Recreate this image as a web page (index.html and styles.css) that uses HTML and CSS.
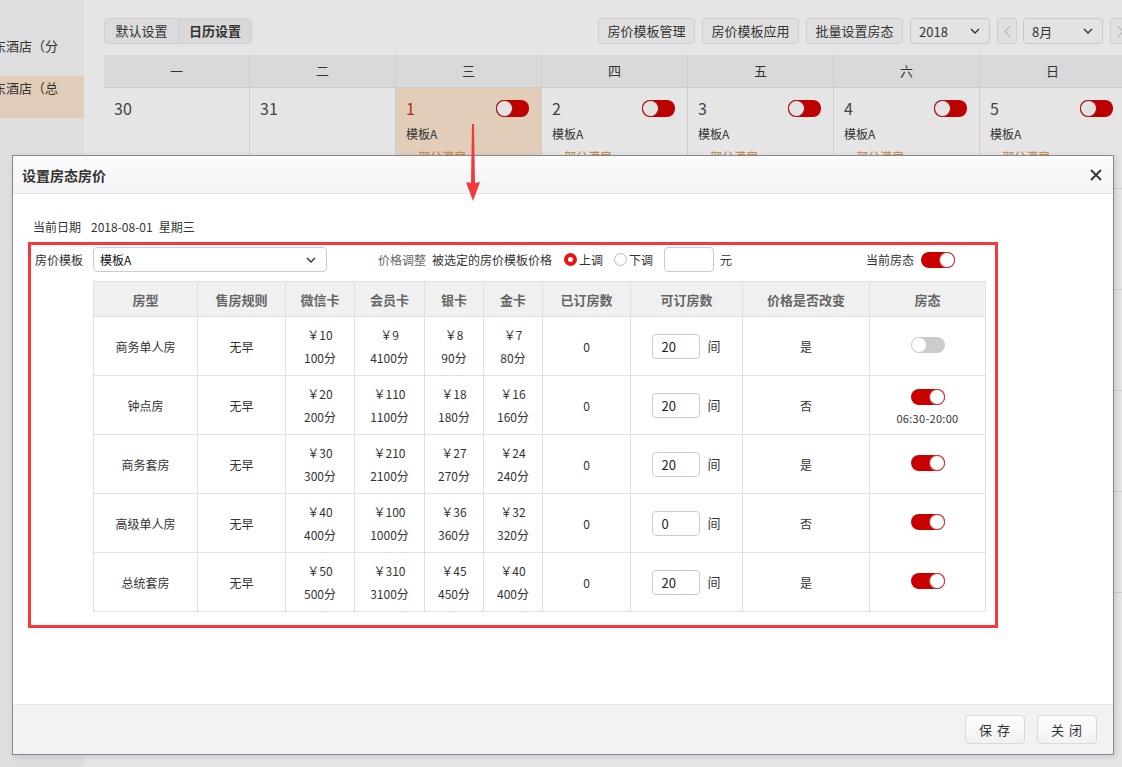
FILE: index.html
```html
<!DOCTYPE html>
<html lang="zh-CN">
<head>
<meta charset="utf-8">
<title>设置房态房价</title>
<link rel="stylesheet" href="styles.css">
</head>
<body>
<div class="page">
  <aside class="sidebar">
    <div class="side-item"><span class="side-text">东酒店（分</span></div>
    <div class="side-item active"><span class="side-text">东酒店（总</span></div>
  </aside>
  <main class="main">
    <div class="toolbar">
      <div class="tabs"><span class="tab">默认设置</span><span class="tab on">日历设置</span></div>
      <div class="tools">
        <span class="btn">房价模板管理</span>
        <span class="btn">房价模板应用</span>
        <span class="btn">批量设置房态</span>
        <span class="sel sel-year">2018<svg class="chev" viewBox="0 0 10 6" width="10" height="6"><polyline points="1,1 5,5 9,1" fill="none" stroke="#333" stroke-width="1.4"/></svg></span>
        <span class="nav-btn"><svg viewBox="0 0 8 14" width="7" height="13"><polyline points="7,1 1,7 7,13" fill="none" stroke="#aaa" stroke-width="1.2"/></svg></span>
        <span class="sel sel-month">8月<svg class="chev" viewBox="0 0 10 6" width="10" height="6"><polyline points="1,1 5,5 9,1" fill="none" stroke="#333" stroke-width="1.4"/></svg></span>
        <span class="nav-btn"><svg viewBox="0 0 8 14" width="7" height="13"><polyline points="1,1 7,7 1,13" fill="none" stroke="#aaa" stroke-width="1.2"/></svg></span>
      </div>
    </div>
    <div class="calendar">
      <div class="wk">一</div><div class="wk">二</div><div class="wk">三</div><div class="wk">四</div><div class="wk">五</div><div class="wk">六</div><div class="wk">日</div>

      <div class="day"><div class="day-top"><span class="num">30</span></div></div>
      <div class="day"><div class="day-top"><span class="num">31</span></div></div>
      <div class="day sel-day"><div class="day-top"><span class="num red">1</span><span class="sw sw-cal"><i></i></span></div><div class="tpl">模板A</div><div class="stat">—部分满房</div></div>
      <div class="day"><div class="day-top"><span class="num">2</span><span class="sw sw-cal"><i></i></span></div><div class="tpl">模板A</div><div class="stat">—部分满房</div></div>
      <div class="day"><div class="day-top"><span class="num">3</span><span class="sw sw-cal"><i></i></span></div><div class="tpl">模板A</div><div class="stat">—部分满房</div></div>
      <div class="day"><div class="day-top"><span class="num">4</span><span class="sw sw-cal"><i></i></span></div><div class="tpl">模板A</div><div class="stat">—部分满房</div></div>
      <div class="day"><div class="day-top"><span class="num">5</span><span class="sw sw-cal"><i></i></span></div><div class="tpl">模板A</div><div class="stat">—部分满房</div></div>

      <div class="day"><div class="day-top end"><span class="sw sw-cal"><i></i></span></div></div>
      <div class="day"><div class="day-top end"><span class="sw sw-cal"><i></i></span></div></div>
      <div class="day"><div class="day-top end"><span class="sw sw-cal"><i></i></span></div></div>
      <div class="day"><div class="day-top end"><span class="sw sw-cal"><i></i></span></div></div>
      <div class="day"><div class="day-top end"><span class="sw sw-cal"><i></i></span></div></div>
      <div class="day"><div class="day-top end"><span class="sw sw-cal"><i></i></span></div></div>
      <div class="day"><div class="day-top end"><span class="sw sw-cal"><i></i></span></div></div>

      <div class="day"><div class="day-top end"><span class="sw sw-cal"><i></i></span></div></div>
      <div class="day"><div class="day-top end"><span class="sw sw-cal"><i></i></span></div></div>
      <div class="day"><div class="day-top end"><span class="sw sw-cal"><i></i></span></div></div>
      <div class="day"><div class="day-top end"><span class="sw sw-cal"><i></i></span></div></div>
      <div class="day"><div class="day-top end"><span class="sw sw-cal"><i></i></span></div></div>
      <div class="day"><div class="day-top end"><span class="sw sw-cal"><i></i></span></div></div>
      <div class="day"><div class="day-top end"><span class="sw sw-cal"><i></i></span></div></div>

      <div class="day"><div class="day-top end"><span class="sw sw-cal"><i></i></span></div></div>
      <div class="day"><div class="day-top end"><span class="sw sw-cal"><i></i></span></div></div>
      <div class="day"><div class="day-top end"><span class="sw sw-cal"><i></i></span></div></div>
      <div class="day"><div class="day-top end"><span class="sw sw-cal"><i></i></span></div></div>
      <div class="day"><div class="day-top end"><span class="sw sw-cal"><i></i></span></div></div>
      <div class="day"><div class="day-top end"><span class="sw sw-cal"><i></i></span></div></div>
      <div class="day"><div class="day-top end"><span class="sw sw-cal"><i></i></span></div></div>

      <div class="day"><div class="day-top end"><span class="sw sw-cal"><i></i></span></div></div>
      <div class="day"><div class="day-top end"><span class="sw sw-cal"><i></i></span></div></div>
      <div class="day"><div class="day-top end"><span class="sw sw-cal"><i></i></span></div></div>
      <div class="day"><div class="day-top end"><span class="sw sw-cal"><i></i></span></div></div>
      <div class="day"><div class="day-top end"><span class="sw sw-cal"><i></i></span></div></div>
      <div class="day"><div class="day-top end"></div></div>
      <div class="day"><div class="day-top end"></div></div>
    </div>
  </main>
</div>

<div class="modal">
  <div class="modal-head">
    <span class="modal-title">设置房态房价</span>
    <svg class="close" viewBox="0 0 12 12" width="12" height="12"><path d="M1 1 L11 11 M11 1 L1 11" stroke="#333" stroke-width="1.8" fill="none"/></svg>
  </div>
  <div class="modal-body">
    <div class="date-line"><span class="lbl">当前日期</span><span class="date-val">2018-08-01</span><span class="date-week">星期三</span></div>
    <div class="red-box">
      <div class="form-row">
        <span class="lbl form-lbl">房价模板</span>
        <span class="select">模板A<svg class="chev" viewBox="0 0 10 6" width="10" height="6"><polyline points="1,1 5,5 9,1" fill="none" stroke="#333" stroke-width="1.4"/></svg></span>
        <span class="muted adj-lbl">价格调整</span>
        <span class="adj-desc">被选定的房价模板价格</span>
        <span class="radio checked"></span><span class="radio-txt">上调</span>
        <span class="radio"></span><span class="radio-txt">下调</span>
        <span class="input adj-input"></span>
        <span class="unit">元</span>
        <span class="state-lbl">当前房态</span>
        <span class="sw on"><i></i></span>
      </div>
      <table class="grid">
        <colgroup>
          <col class="c1"><col class="c2"><col class="c3"><col class="c4"><col class="c5"><col class="c6"><col class="c7"><col class="c8"><col class="c9"><col class="c10">
        </colgroup>
        <thead>
          <tr><th>房型</th><th>售房规则</th><th>微信卡</th><th>会员卡</th><th>银卡</th><th>金卡</th><th>已订房数</th><th>可订房数</th><th>价格是否改变</th><th>房态</th></tr>
        </thead>
        <tbody>
          <tr>
            <td>商务单人房</td><td>无早</td>
            <td><div class="pr">￥10</div><div class="pr">100分</div></td>
            <td><div class="pr">￥9</div><div class="pr">4100分</div></td>
            <td><div class="pr">￥8</div><div class="pr">90分</div></td>
            <td><div class="pr">￥7</div><div class="pr">80分</div></td>
            <td>0</td>
            <td><div class="qty"><span class="input num-input">20</span><span class="qty-unit">间</span></div></td>
            <td>是</td>
            <td><span class="sw off"><i></i></span></td>
          </tr>
          <tr>
            <td>钟点房</td><td>无早</td>
            <td><div class="pr">￥20</div><div class="pr">200分</div></td>
            <td><div class="pr">￥110</div><div class="pr">1100分</div></td>
            <td><div class="pr">￥18</div><div class="pr">180分</div></td>
            <td><div class="pr">￥16</div><div class="pr">160分</div></td>
            <td>0</td>
            <td><div class="qty"><span class="input num-input">20</span><span class="qty-unit">间</span></div></td>
            <td>否</td>
            <td><div class="state-cell"><span class="sw on"><i></i></span><span class="time">06:30-20:00</span></div></td>
          </tr>
          <tr>
            <td>商务套房</td><td>无早</td>
            <td><div class="pr">￥30</div><div class="pr">300分</div></td>
            <td><div class="pr">￥210</div><div class="pr">2100分</div></td>
            <td><div class="pr">￥27</div><div class="pr">270分</div></td>
            <td><div class="pr">￥24</div><div class="pr">240分</div></td>
            <td>0</td>
            <td><div class="qty"><span class="input num-input">20</span><span class="qty-unit">间</span></div></td>
            <td>是</td>
            <td><span class="sw on"><i></i></span></td>
          </tr>
          <tr>
            <td>高级单人房</td><td>无早</td>
            <td><div class="pr">￥40</div><div class="pr">400分</div></td>
            <td><div class="pr">￥100</div><div class="pr">1000分</div></td>
            <td><div class="pr">￥36</div><div class="pr">360分</div></td>
            <td><div class="pr">￥32</div><div class="pr">320分</div></td>
            <td>0</td>
            <td><div class="qty"><span class="input num-input">0</span><span class="qty-unit">间</span></div></td>
            <td>否</td>
            <td><span class="sw on"><i></i></span></td>
          </tr>
          <tr>
            <td>总统套房</td><td>无早</td>
            <td><div class="pr">￥50</div><div class="pr">500分</div></td>
            <td><div class="pr">￥310</div><div class="pr">3100分</div></td>
            <td><div class="pr">￥45</div><div class="pr">450分</div></td>
            <td><div class="pr">￥40</div><div class="pr">400分</div></td>
            <td>0</td>
            <td><div class="qty"><span class="input num-input">20</span><span class="qty-unit">间</span></div></td>
            <td>是</td>
            <td><span class="sw on"><i></i></span></td>
          </tr>
        </tbody>
      </table>
    </div>
  </div>
  <div class="modal-foot">
    <span class="fbtn">保 存</span>
    <span class="fbtn">关 闭</span>
  </div>
</div>

<svg class="annot-arrow" viewBox="0 0 18 84" width="18" height="84"><path d="M8 4 L10 4 L11 63 L16 62 L9 81 L2 62 L7 63 Z" fill="#f23a3a"/></svg>
</body>
</html>
```

FILE: styles.css
```css
* { box-sizing: border-box; }
html, body { margin: 0; padding: 0; }
body {
  width: 1122px;
  height: 767px;
  overflow: hidden;
  background: #e5e5e5;
  font-family: "Microsoft YaHei", "Noto Sans CJK SC", "Noto Sans", sans-serif;
  color: #333;
  font-size: 12px;
  position: relative;
}

.page { display: flex; height: 767px; }

/* sidebar */
.sidebar {
  width: 84px;
  flex: none;
  background: #dedede;
  padding-top: 34px;
  overflow: hidden;
}
.side-item {
  height: 42px;
  padding-top: 4px;
  font-size: 13px;
  line-height: 16px;
  white-space: nowrap;
  color: #333;
}
.side-item.active { background: #e2cdb9; }
.side-text { display: block; margin-left: -7px; }

/* main */
.main {
  flex: 1;
  padding: 18px 0 0 20px;
  overflow: hidden;
}
.toolbar { display: flex; align-items: center; height: 26px; width: 1030px; }
.tabs {
  display: flex;
  border: 1px solid #cfcfcf;
  border-radius: 4px;
  background: #dcdcdc;
  height: 26px;
  overflow: hidden;
}
.tab {
  width: 73px;
  line-height: 24px;
  text-align: center;
  font-size: 13px;
  color: #333;
}
.tab + .tab { border-left: 1px solid #cfcfcf; }
.tab.on { font-weight: bold; background: #d8d8d8; }

.tools { display: flex; align-items: center; gap: 7px; margin-left: 346px; }
.btn {
  height: 26px;
  width: 97px;
  line-height: 24px;
  text-align: center;
  border: 1px solid #cdcdcd;
  border-radius: 4px;
  background: #e0e0e0;
  font-size: 13px;
  white-space: nowrap;
}
.sel {
  height: 26px;
  border: 1px solid #c8c8c8;
  border-radius: 4px;
  background: #e3e3e3;
  display: flex;
  align-items: center;
  justify-content: space-between;
  padding: 0 9px 0 8px;
  font-size: 13px;
}
.sel-year { width: 80px; }
.sel-month { width: 80px; margin-left: -1px; }
.nav-btn {
  width: 20px;
  height: 26px;
  border: 1px solid #cdcdcd;
  border-radius: 3px;
  background: #e0e0e0;
  display: flex;
  align-items: center;
  justify-content: center;
}

/* calendar */
.calendar {
  margin-top: 11px;
  display: grid;
  grid-template-columns: repeat(7, 146px);
  grid-auto-rows: 101px;
  grid-template-rows: 33px;
  width: 1022px;
}
.wk {
  background: #d9d9d9;
  border-right: 1px solid #cdcdcd;
  border-bottom: 1px solid #cdcdcd;
  text-align: center;
  line-height: 32px;
  font-size: 13px;
  color: #333;
}
.day {
  border-right: 1px solid #cfcfcf;
  border-bottom: 1px solid #cfcfcf;
  padding: 10px 12px 0 10px;
  background: #e5e5e5;
}
.day.sel-day { background: #e2cdb9; }
.day-top { display: flex; justify-content: space-between; align-items: center; height: 20px; }
.day-top.end { justify-content: flex-end; }
.num { font-size: 16px; line-height: 20px; color: #444; }
.num.red { color: #b0241c; }
.tpl { margin-top: 8px; line-height: 16px; font-size: 12px; color: #333; }
.stat { margin-top: 7px; line-height: 16px; font-size: 12px; color: #c8802e; }

/* switches */
.sw {
  display: inline-flex;
  align-items: center;
  width: 34px;
  height: 16px;
  border-radius: 8px;
  padding: 1px;
  background: #c80000;
}
.sw i {
  display: block;
  width: 14px;
  height: 14px;
  border-radius: 50%;
  background: #fff;
}
.sw.on { justify-content: flex-end; }
.sw.on i { box-shadow: 0 0 0 1px #d04040; }
.sw.off { background: #cccccc; justify-content: flex-start; }
.sw-cal { width: 33px; height: 17px; justify-content: flex-start; background: #bd0000; }
.sw-cal i { width: 15px; height: 15px; background: #e3e3e3; box-shadow: 0 0 0 1px #a02020; }

/* modal */
.modal {
  position: absolute;
  left: 12px;
  top: 155px;
  width: 1102px;
  height: 600px;
  border: 1px solid #7d8b98;
  background: #fff;
  box-shadow: 2px 2px 6px rgba(0, 0, 0, 0.12);
  display: flex;
  flex-direction: column;
}
.modal-head {
  height: 38px;
  flex: none;
  border-bottom: 1px solid #e3e3e3;
  background: linear-gradient(#fbfbfb, #f4f4f4);
  display: flex;
  align-items: center;
  justify-content: space-between;
  padding: 0 11px 0 9px;
}
.modal-title { font-size: 14px; font-weight: bold; color: #333; }
.close { display: block; }

.modal-body { flex: 1; padding: 23px 0 0 15px; }
.date-line { padding-left: 5px; line-height: 20px; height: 20px; display: flex; }
.lbl { font-size: 12px; color: #333; }
.date-val { font-size: 12px; margin-left: 10px; }
.date-week { font-size: 12px; margin-left: 6px; }

.red-box {
  margin-top: 5px;
  width: 970px;
  height: 386px;
  border: 3px solid #f5383b;
  padding-top: 2px;
}
.form-row {
  display: flex;
  align-items: center;
  height: 25px;
  padding: 0 40px 0 4px;
}
.form-lbl { width: 58px; flex: none; }
.select {
  width: 234px;
  height: 25px;
  border: 1px solid #ccc;
  border-radius: 4px;
  display: flex;
  align-items: center;
  justify-content: space-between;
  padding: 0 10px 0 6px;
  font-size: 12px;
  color: #111;
}
.muted { color: #666; }
.adj-lbl { margin-left: 51px; }
.adj-desc { margin-left: 6px; }
.radio {
  width: 13px;
  height: 13px;
  border-radius: 50%;
  border: 1px solid #bbb;
  background: #fff;
  margin-left: 11px;
}
.radio.checked { border: 4px solid #ee1111; margin-left: 12px; }
.radio-txt { margin-left: 2px; font-size: 12px; }
.input {
  border: 1px solid #ccc;
  border-radius: 4px;
  background: #fff;
}
.adj-input { width: 50px; height: 25px; margin-left: 11px; }
.unit { margin-left: 6px; font-size: 12px; }
.state-lbl { margin-left: auto; margin-right: 7px; }

.grid {
  margin: 9px 0 0 62px;
  width: 892px;
  border-collapse: collapse;
  table-layout: fixed;
}
.c1 { width: 104px; } .c2 { width: 88px; } .c3 { width: 69px; } .c4 { width: 70px; }
.c5 { width: 59px; } .c6 { width: 59px; } .c7 { width: 88px; } .c8 { width: 112px; }
.c9 { width: 127px; } .c10 { width: 116px; }
.grid th, .grid td {
  border: 1px solid #e0e0e0;
  text-align: center;
  vertical-align: middle;
  padding: 0;
}
.grid th {
  height: 35px;
  background: #f0f0f0;
  font-size: 13px;
  font-weight: bold;
  color: #666;
}
.grid td { height: 59px; font-size: 12px; color: #333; }
.pr { line-height: 23px; }
.qty { display: flex; align-items: center; justify-content: center; }
.num-input {
  width: 48px;
  height: 25px;
  line-height: 23px;
  text-align: left;
  padding-left: 8px;
  font-size: 13px;
  color: #222;
}
.qty-unit { margin-left: 7px; font-size: 13px; line-height: 18px; }
.state-cell { display: flex; flex-direction: column; align-items: center; padding-top: 4px; }
.time { margin-top: 6px; font-size: 11px; line-height: 14px; letter-spacing: 0.3px; }

.modal-foot {
  height: 50px;
  flex: none;
  border-top: 1px solid #e6e6e6;
  background: #f2f2f2;
  display: flex;
  justify-content: flex-end;
  align-items: center;
  gap: 12px;
  padding: 0 16px 0 0;
}
.fbtn {
  width: 60px;
  height: 29px;
  line-height: 27px;
  text-align: center;
  border: 1px solid #dadada;
  border-radius: 4px;
  background: linear-gradient(#fdfdfd, #f1f1f1);
  font-size: 13px;
  color: #333;
  letter-spacing: 1px;
}

.annot-arrow {
  position: absolute;
  left: 464px;
  top: 120px;
}
```
